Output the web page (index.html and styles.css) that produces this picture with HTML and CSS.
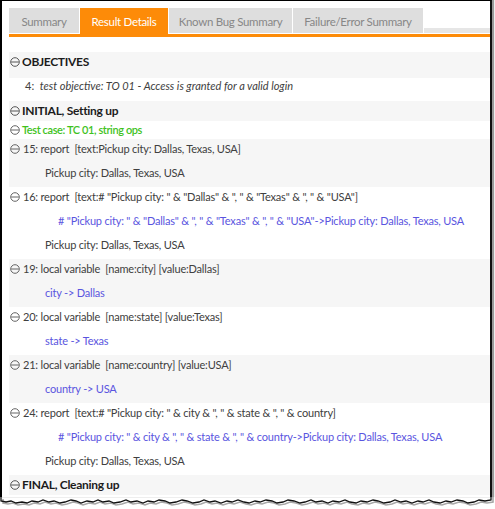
FILE: index.html
```html
<!DOCTYPE html>
<html>
<head>
<meta charset="utf-8">
<link rel="stylesheet" href="styles.css">
</head>
<body>
<div class="frame">
  <nav class="tabs">
    <div class="tab t1">Summary</div>
    <div class="tab t2 active">Result Details</div>
    <div class="tab t3">Known Bug Summary</div>
    <div class="tab t4">Failure/Error Summary</div>
    <div class="tab-rest"></div>
  </nav>
  <div class="rule"></div>

  <div class="results">
    <div class="hd hd-obj"><svg class="ico" viewBox="0 0 10 10"><circle cx="5" cy="5" r="4.3"/><line x1="1.2" y1="5" x2="8.8" y2="5"/></svg><span>OBJECTIVES</span></div>
    <div class="objective"><span class="num">4:</span>  <i>test objective: TO 01 - Access is granted for a valid login</i></div>

    <div class="hd hd-init"><svg class="ico" viewBox="0 0 10 10"><circle cx="5" cy="5" r="4.3"/><line x1="1.2" y1="5" x2="8.8" y2="5"/></svg><span>INITIAL, Setting up</span></div>
    <div class="testcase"><svg class="ico" viewBox="0 0 10 10"><circle cx="5" cy="5" r="4.3"/><line x1="1.2" y1="5" x2="8.8" y2="5"/></svg><span>Test case: TC 01, string ops</span></div>

    <div class="step alt">
      <div class="line title"><svg class="ico" viewBox="0 0 10 10"><circle cx="5" cy="5" r="4.3"/><line x1="1.2" y1="5" x2="8.8" y2="5"/></svg><span>15: report  [text:Pickup city: Dallas, Texas, USA]</span></div>
      <div class="line out">Pickup city: Dallas, Texas, USA</div>
    </div>

    <div class="step">
      <div class="line title"><svg class="ico" viewBox="0 0 10 10"><circle cx="5" cy="5" r="4.3"/><line x1="1.2" y1="5" x2="8.8" y2="5"/></svg><span>16: report  [text:# "Pickup city: " &amp; "Dallas" &amp; ", " &amp; "Texas" &amp; ", " &amp; "USA"]</span></div>
      <div class="line expr"># "Pickup city: " &amp; "Dallas" &amp; ", " &amp; "Texas" &amp; ", " &amp; "USA"-&gt;Pickup city: Dallas, Texas, USA</div>
      <div class="line out">Pickup city: Dallas, Texas, USA</div>
    </div>

    <div class="step alt">
      <div class="line title"><svg class="ico" viewBox="0 0 10 10"><circle cx="5" cy="5" r="4.3"/><line x1="1.2" y1="5" x2="8.8" y2="5"/></svg><span>19: local variable  [name:city] [value:Dallas]</span></div>
      <div class="line var">city -&gt; Dallas</div>
    </div>

    <div class="step">
      <div class="line title"><svg class="ico" viewBox="0 0 10 10"><circle cx="5" cy="5" r="4.3"/><line x1="1.2" y1="5" x2="8.8" y2="5"/></svg><span>20: local variable  [name:state] [value:Texas]</span></div>
      <div class="line var">state -&gt; Texas</div>
    </div>

    <div class="step alt">
      <div class="line title"><svg class="ico" viewBox="0 0 10 10"><circle cx="5" cy="5" r="4.3"/><line x1="1.2" y1="5" x2="8.8" y2="5"/></svg><span>21: local variable  [name:country] [value:USA]</span></div>
      <div class="line var">country -&gt; USA</div>
    </div>

    <div class="step">
      <div class="line title"><svg class="ico" viewBox="0 0 10 10"><circle cx="5" cy="5" r="4.3"/><line x1="1.2" y1="5" x2="8.8" y2="5"/></svg><span>24: report  [text:# "Pickup city: " &amp; city &amp; ", " &amp; state &amp; ", " &amp; country]</span></div>
      <div class="line expr"># "Pickup city: " &amp; city &amp; ", " &amp; state &amp; ", " &amp; country-&gt;Pickup city: Dallas, Texas, USA</div>
      <div class="line out">Pickup city: Dallas, Texas, USA</div>
    </div>

    <div class="hd hd-final"><svg class="ico" viewBox="0 0 10 10"><circle cx="5" cy="5" r="4.3"/><line x1="1.2" y1="5" x2="8.8" y2="5"/></svg><span>FINAL, Cleaning up</span></div>
  </div>
</div>
<svg class="torn" width="495" height="12" viewBox="0 0 495 12">
  <path class="torn-shadow" d="M3,2 L3,6 L8,7 L13,6 L18,8 L24,7 L29,8 L34,6 L40,7 L45,5 L51,7 L56,6 L62,8 L67,7 L73,5 L78,6 L83,8 L89,6 L95,7 L100,5 L105,7 L111,6 L116,8 L122,7 L128,5 L133,7 L139,6 L145,8 L150,6 L156,7 L161,5 L167,6 L172,8 L178,7 L184,5 L189,6 L195,8 L201,7 L206,5 L212,7 L217,6 L223,8 L229,6 L234,7 L240,5 L246,7 L251,8 L257,6 L262,7 L268,5 L274,6 L279,8 L285,7 L290,5 L296,6 L302,8 L307,7 L313,5 L318,7 L324,6 L330,8 L335,6 L341,7 L347,5 L352,7 L358,8 L363,6 L369,7 L375,5 L380,6 L386,8 L392,7 L397,5 L403,7 L408,6 L414,8 L420,6 L425,7 L431,5 L436,7 L442,8 L448,6 L453,7 L459,5 L465,6 L470,8 L476,7 L481,5 L487,6 L493,5 L493,0"/>
  <path class="torn-line" d="M1,0 L1,4 L6,5 L11,4 L16,6 L22,5 L27,6 L32,4 L38,5 L43,3 L49,5 L54,4 L60,6 L65,5 L71,3 L76,4 L81,6 L87,4 L93,5 L98,3 L103,5 L109,4 L114,6 L120,5 L126,3 L131,5 L137,4 L143,6 L148,4 L154,5 L159,3 L165,4 L170,6 L176,5 L182,3 L187,4 L193,6 L199,5 L204,3 L210,5 L215,4 L221,6 L227,4 L232,5 L238,3 L244,5 L249,6 L255,4 L260,5 L266,3 L272,4 L277,6 L283,5 L288,3 L294,4 L300,6 L305,5 L311,3 L316,5 L322,4 L328,6 L333,4 L339,5 L345,3 L350,5 L356,6 L361,4 L367,5 L373,3 L378,4 L384,6 L390,5 L395,3 L401,5 L406,4 L412,6 L418,4 L423,5 L429,3 L434,5 L440,6 L446,4 L451,5 L457,3 L463,4 L468,6 L474,5 L479,3 L485,4 L491,3 L491,0"/>
</svg>
</body>
</html>
```
FILE: styles.css
```css
* { box-sizing: border-box; }
html, body { margin: 0; padding: 0; background: #fff; }
body {
  width: 495px;
  height: 509px;
  overflow: hidden;
  font-family: Lato, "Open Sans", sans-serif;
  font-size: 11px;
  letter-spacing: -0.2px;
  color: #404040;
}
.frame {
  width: 492px;
  border-top: 1px solid #000;
  border-left: 2px solid #000;
  border-right: 2px solid #111;
  box-shadow: 2px 0 1px #9a9a9a;
  padding: 7px 0 2px 7px;
}
.tabs {
  display: flex;
  height: 26px;
  gap: 1px;
}
.tab {
  display: flex;
  align-items: center;
  justify-content: center;
  background: #dedede;
  color: #878787;
  border-bottom: 1px solid #fff;
  padding-top: 1px;
  font-size: 11.5px;
  letter-spacing: -0.3px;
}
.t1 { width: 70px; }
.t2 { width: 88px; }
.t3 { width: 123px; }
.t4 { width: 130px; }
.tab.active {
  background: #fd8b08;
  color: #fff;
  border-bottom: 0;
}
.tab-rest {
  flex: 1;
  align-self: flex-end;
  height: 6px;
  background: #e6e6e6;
  border-bottom: 1px solid #fff;
}
.rule {
  height: 3px;
  background: #fd8b08;
}
.results { margin-top: 15px; }

.ico {
  width: 10px;
  height: 10px;
  flex: none;
  fill: none;
  stroke: #555;
  stroke-width: 0.9;
}
.hd {
  display: flex;
  align-items: center;
  gap: 2px;
  padding-left: 1px;
  font-weight: bold;
  font-size: 12px;
  letter-spacing: -0.3px;
  color: #1c1c1c;
  line-height: 20px;
  background: #f6f6f6;
}
.hd .ico { stroke: #444; }
.hd-obj { padding-bottom: 6px; }
.objective {
  white-space: pre;
  line-height: 16px;
  padding: 0 0 7px 16px;
  letter-spacing: 0;
  color: #404040;
}
.testcase {
  display: flex;
  align-items: center;
  gap: 2px;
  padding-left: 1px;
  line-height: 18px;
  font-weight: 600;
  letter-spacing: -0.4px;
  color: #3fc21e;
}
.step.alt { background: #f6f6f6; }
.line {
  line-height: 20px;
  padding-bottom: 4px;
  white-space: pre;
}
.line.title {
  display: flex;
  align-items: center;
  gap: 3px;
  padding-left: 1px;
  padding-bottom: 4px;
}
.line.out { padding-left: 36px; }
.line.var { padding-left: 36px; color: #5a55e0; }
.line.expr { padding-left: 49px; color: #5a55e0; }

.torn { display: block; }
.torn-shadow { fill: none; stroke: #a8a8a8; stroke-width: 1.6; }
.torn-line { fill: none; stroke: #111; stroke-width: 1.3; }
```
